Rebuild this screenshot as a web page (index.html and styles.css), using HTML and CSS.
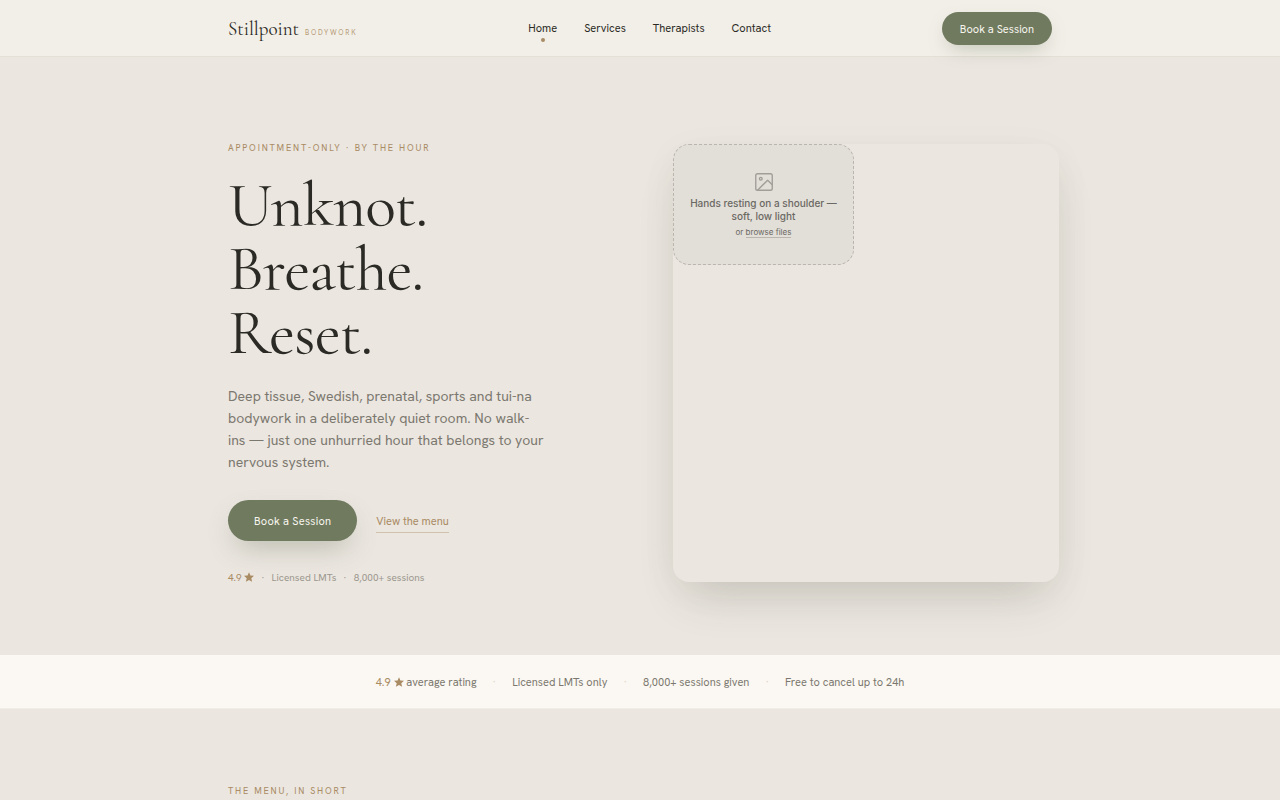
FILE: index.html
```html
<!DOCTYPE html>
<html lang="en">
<head>
<meta charset="UTF-8">
<meta name="viewport" content="width=device-width, initial-scale=1.0">
<title>Stillpoint Bodywork</title>
<link rel="stylesheet" href="styles.css">
</head>
<body>

<svg class="sprite" aria-hidden="true">
  <symbol id="star" viewBox="0 0 24 24">
    <path d="M12 0.500l3.400 8 8.600.700-6.500 5.700 2 8.600L12 19l-7.500 4.500 2-8.600L0 9.200l8.600-.700z" fill="currentColor"/>
  </symbol>
</svg>

<header class="site-header">
  <div class="container header-row">
    <a href="#" class="brand"><span class="brand-name">Stillpoint</span><span class="brand-sub">Bodywork</span></a>
    <nav class="nav">
      <a href="#" class="active">Home</a>
      <a href="#services">Services</a>
      <a href="#therapists">Therapists</a>
      <a href="#contact">Contact</a>
    </nav>
    <a href="#book" class="btn btn-small">Book a Session</a>
  </div>
</header>

<main>
  <section class="hero">
    <div class="container hero-grid">
      <div class="hero-copy">
        <p class="eyebrow">Appointment-only · By the hour</p>
        <h1>Unknot.<br>Breathe.<br>Reset.</h1>
        <p class="lead">Deep tissue, Swedish, prenatal, sports and tui-na bodywork in a deliberately quiet room. No walk-ins — just one unhurried hour that belongs to your nervous system.</p>
        <div class="actions">
          <a href="#book" class="btn btn-large">Book a Session</a>
          <a href="#services" class="text-link">View the menu</a>
        </div>
        <p class="proof">
          <span class="rating">4.9 <svg class="star"><use href="#star"/></svg></span>
          <span>·</span>
          <span>Licensed LMTs</span>
          <span>·</span>
          <span>8,000+ sessions</span>
        </p>
      </div>

      <div class="hero-media">
        <div class="dropzone">
          <svg class="image-icon" viewBox="0 0 24 24" fill="none" stroke="currentColor" stroke-width="1.5" stroke-linecap="round" stroke-linejoin="round">
            <rect x="3" y="3" width="18" height="18" rx="2"/>
            <circle cx="8.500" cy="8.500" r="1.500"/>
            <path d="M21 15l-5-5L5 21"/>
          </svg>
          <p class="dropzone-title">Hands resting on a shoulder — soft, low light</p>
          <p class="dropzone-sub">or <button type="button">browse files</button></p>
        </div>
      </div>
    </div>
  </section>

  <section class="strip">
    <ul class="strip-list">
      <li><span class="rating">4.9 <svg class="star"><use href="#star"/></svg></span> average rating</li>
      <li>Licensed LMTs only</li>
      <li>8,000+ sessions given</li>
      <li>Free to cancel up to 24h</li>
    </ul>
  </section>

  <section class="menu" id="services">
    <div class="container">
      <p class="eyebrow">The menu, in short</p>
    </div>
  </section>
</main>

</body>
</html>
```
FILE: styles.css
```css
:root {
  --cream: #f2efe8;
  --sand: #ebe6e0;
  --paper: #fbf8f3;
  --ink: #2b2a25;
  --muted: #7b786f;
  --faint: #9c988e;
  --gold: #a98b64;
  --sage: #6f7a5f;
  --serif: "Cormorant Garamond", "Liberation Serif", serif;
  --sans: "Hanken Grotesk", Roboto, sans-serif;
}

* {
  box-sizing: border-box;
}

body {
  margin: 0;
  background: var(--sand);
  color: var(--ink);
  font-family: var(--sans);
  font-size: 14px;
  line-height: 22px;
}

a {
  color: inherit;
  text-decoration: none;
}

p, h1, ul {
  margin: 0;
  padding: 0;
}

.sprite {
  display: none;
}

.container {
  max-width: 880px;
  margin: 0 auto;
  padding: 0 28px;
}

/* Header */
.site-header {
  position: sticky;
  top: 0;
  z-index: 10;
  background: var(--cream);
  border-bottom: 1px solid #e4dfd7;
}

.header-row {
  display: flex;
  align-items: center;
  justify-content: space-between;
  min-height: 56px;
}

.brand {
  display: flex;
  align-items: baseline;
  gap: 6px;
  padding-top: 6px;
}

.brand-name {
  font-family: var(--serif);
  font-size: 19px;
}

.brand-sub {
  color: #b79c78;
  font-size: 7px;
  letter-spacing: 0.25em;
  text-transform: uppercase;
}

.nav {
  display: flex;
  gap: 27px;
  font-size: 11px;
}

.nav a {
  position: relative;
}

.nav .active::after {
  content: "";
  position: absolute;
  left: 50%;
  bottom: -3px;
  width: 4px;
  height: 4px;
  margin-left: -2px;
  border-radius: 50%;
  background: var(--gold);
}

.btn {
  border-radius: 999px;
  background: var(--sage);
  color: #f8f5ee;
  box-shadow: 0 8px 20px -6px rgba(111, 122, 95, 0.4);
}

.btn-small {
  padding: 6px 18px 5px;
  font-size: 11px;
}

.btn-large {
  padding: 10px 26px 9px;
  font-size: 11px;
  letter-spacing: 0.02em;
  box-shadow: 0 12px 28px -8px rgba(111, 122, 95, 0.45);
}

/* Hero */
.hero {
  padding: 87px 0 70px;
}

.hero-grid {
  display: grid;
  grid-template-columns: 385px 386px;
  gap: 60px;
}

.eyebrow {
  color: var(--gold);
  font-size: 9px;
  line-height: 8px;
  letter-spacing: 0.2em;
  text-transform: uppercase;
}

h1 {
  margin-top: 21px;
  font-family: var(--serif);
  font-size: 64px;
  font-weight: 400;
  line-height: 64px;
  letter-spacing: -1px;
}

.lead {
  max-width: 317px;
  margin-top: 20px;
  color: var(--muted);
}

.actions {
  display: flex;
  align-items: center;
  gap: 19px;
  margin-top: 27px;
}

.text-link {
  padding-top: 1px;
  border-bottom: 1px solid #d0c3ae;
  color: var(--gold);
  font-size: 11px;
}

.proof {
  display: flex;
  gap: 7px;
  margin-top: 30px;
  color: var(--faint);
  font-size: 10px;
  line-height: 14px;
}

.rating {
  color: var(--gold);
}

.star {
  width: 10px;
  height: 10px;
  vertical-align: -1px;
}

.hero-media {
  height: 438px;
  border-radius: 16px;
  background: var(--sand);
  box-shadow: 0 24px 48px -14px rgba(60, 66, 45, 0.2), 0 8px 40px rgba(60, 66, 45, 0.04);
}

.dropzone {
  display: flex;
  flex-direction: column;
  align-items: center;
  justify-content: center;
  width: 181px;
  height: 121px;
  padding: 0 12px;
  border: 1px dashed #bab6af;
  border-radius: 16px;
  background: #e2ded8;
  color: #6b6963;
  font-family: Inter, sans-serif;
  text-align: center;
}

.image-icon {
  width: 22px;
  height: 22px;
  color: #a19e98;
}

.dropzone-title {
  margin-top: 4px;
  font-size: 10px;
  font-weight: 500;
  line-height: 13px;
}

.dropzone-sub {
  margin-top: 3px;
  font-size: 8px;
  line-height: 13px;
}

.dropzone button {
  padding: 0;
  border: 0;
  border-bottom: 1px solid #bab6af;
  background: none;
  color: inherit;
  font: inherit;
  line-height: 10px;
  cursor: pointer;
}

/* Trust strip */
.strip {
  padding: 16px 0 15px;
  border-bottom: 1px solid #f0ece6;
  background: var(--paper);
}

.strip-list {
  display: flex;
  justify-content: center;
  list-style: none;
  color: var(--muted);
  font-size: 11px;
}

.strip-list li + li::before {
  content: "·";
  margin: 0 16px;
  color: #ddd5c8;
}

.menu {
  padding: 78px 0;
}

@media (max-width: 860px) {
  .hero-grid {
    grid-template-columns: 1fr;
  }

  .strip-list {
    flex-wrap: wrap;
  }
}
```
